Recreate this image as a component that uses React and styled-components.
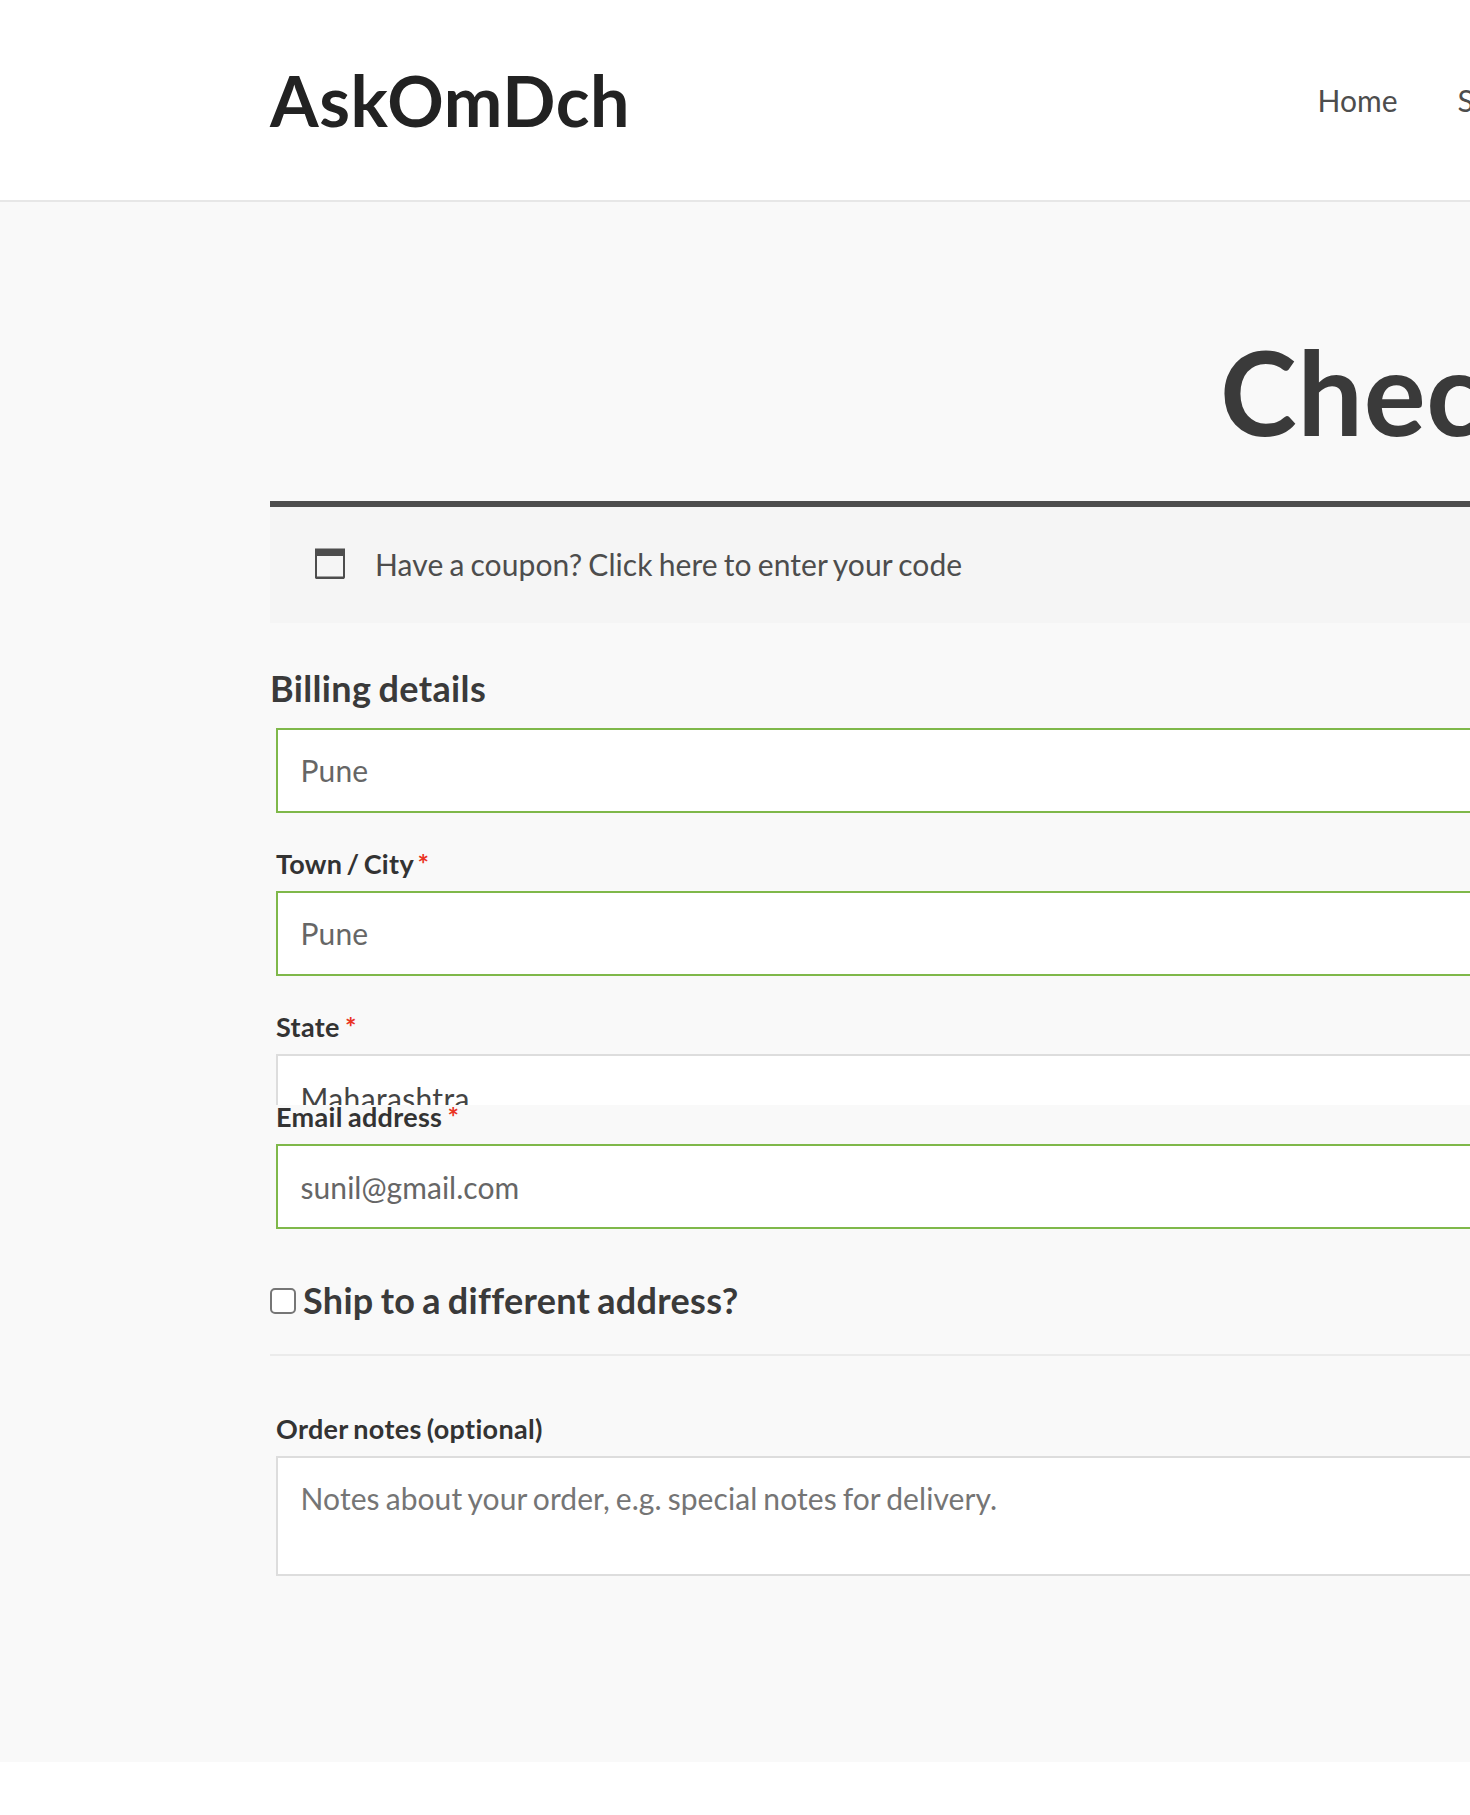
import React from "react";
import styled, { createGlobalStyle } from "styled-components";

const GlobalStyle = createGlobalStyle`
  *, *::before, *::after { box-sizing: border-box; }
  html, body { margin: 0; padding: 0; background: #fff; }
  body, input, textarea {
    font-family: Lato, "Liberation Sans", sans-serif;
    font-size: 30px;
    font-variant-ligatures: none;
  }
`;

const Page = styled.div`
  width: 100%;
  height: 1815px;
  overflow: hidden;
  background: #fff;
  color: #4d4d4d;
`;

const Header = styled.header`
  display: flex;
  justify-content: space-between;
  height: 202px;
  padding-left: 270px;
  border-bottom: 2px solid #e7e7e7;
`;

const Logo = styled.a`
  padding-top: 58px;
  font-size: 70px;
  line-height: 84px;
  font-weight: 700;
  letter-spacing: 0.58px;
  color: #222;
`;

const Nav = styled.nav`
  display: flex;
  gap: 60px;
  width: 152.5px;
  padding-top: 82px;
  line-height: 36px;
  white-space: nowrap;
`;

const Main = styled.main`
  height: 1560px;
  padding: 120px 0 0 270px;
  background: #f9f9f9;
`;

const Content = styled.div`
  width: 2400px;
`;

const Title = styled.h1`
  margin: 0 0 39px;
  font-size: 116px;
  line-height: 140px;
  font-weight: 700;
  letter-spacing: 0.7px;
  text-align: center;
  color: #3a3a3a;
`;

const Notice = styled.div`
  display: flex;
  align-items: center;
  gap: 30px;
  height: 122px;
  padding: 0 0 2px 45px;
  border-top: 6px solid #4d4d4d;
  background: #f5f5f5;
  line-height: 36px;
  letter-spacing: 0.1px;
  word-spacing: -1.75px;
`;

const NoticeIcon = styled.svg`
  display: block;
  flex: none;
  width: 30px;
  height: 31px;
  margin-bottom: 1px;
`;

const Column = styled.section`
  width: 1320px;
`;

const SectionHeading = styled.h3`
  margin: 0;
  padding-top: 43px;
  height: 105px;
  font-size: 36px;
  line-height: 44px;
  font-weight: 700;
  letter-spacing: 0.36px;
  word-spacing: -2px;
  color: #3a3a3a;
`;

const Field = styled.div`
  display: flex;
  flex-direction: column;
  margin: 0 6px ${(p) => p.$gap ?? 39}px;
`;

const Label = styled.label`
  margin-bottom: 16px;
  font-size: 27px;
  line-height: 23px;
  font-weight: 700;
  letter-spacing: 0.32px;
  word-spacing: ${(p) => p.$space ?? -1.7}px;
  color: #333;
`;

const Required = styled.span`
  color: #ea3323;
`;

const Input = styled.input`
  flex: none;
  width: 100%;
  height: 85px;
  padding: ${(p) => p.$top ?? 0}px 22px ${(p) => p.$bottom ?? 0}px 22.6px;
  border: 2px solid ${(p) => (p.$valid ? "#7fb84a" : "#ddd")};
  border-radius: 0;
  outline: none;
  background: #fff;
  letter-spacing: ${(p) => p.$tracking ?? 0.1}px;
  color: ${(p) => (p.$valid ? "#666" : "#444")};
`;

const CutOff = styled.div`
  height: 51px;
  overflow: hidden;
`;

const ShipRow = styled.label`
  display: flex;
  align-items: center;
  gap: 7px;
  height: 76px;
  font-size: 36px;
  line-height: 44px;
  font-weight: 700;
  letter-spacing: 0.3px;
  word-spacing: -2px;
  color: #3a3a3a;
`;

const ShipText = styled.span`
  padding-bottom: 2px;
`;

const Checkbox = styled.input`
  appearance: none;
  flex: none;
  width: 26px;
  height: 26px;
  margin: 0;
  border: 2px solid #767676;
  border-radius: 5px;
  background: #fff;
`;

const Divider = styled.hr`
  height: 2px;
  margin: 15px 0 61px;
  border: 0;
  background: #ebebeb;
`;

const Notes = styled.textarea`
  display: block;
  width: 100%;
  height: 120px;
  padding: 22px 22px 22px 22.6px;
  border: 2px solid #ddd;
  border-radius: 0;
  outline: none;
  resize: none;
  overflow: hidden;
  background: #fff;
  line-height: 36px;
  letter-spacing: 0.08px;
  word-spacing: -1.8px;
  &::placeholder { color: #757575; opacity: 1; }
`;

export default function App() {
  return (
    <Page>
      <GlobalStyle />
      <Header>
        <Logo>AskOmDch</Logo>
        <Nav>
          <span>Home</span>
          <span>Store</span>
        </Nav>
      </Header>
      <Main>
        <Content>
          <Title>Checkout</Title>
          <Notice>
            <NoticeIcon viewBox="0 0 30 31">
              <path fill="#4d4d4d" fillRule="evenodd" d="M0 0.6H30V29.5L29 31H1L0 30ZM2 8V28.6H28V8Z" />
            </NoticeIcon>
            <span>Have a coupon? Click here to enter your code</span>
          </Notice>
          <Column>
            <SectionHeading>Billing details</SectionHeading>
            <Field>
              <Input $valid $bottom={2} defaultValue="Pune" />
            </Field>
            <Field>
              <Label $space={-2.7}>Town / City <Required>*</Required></Label>
              <Input $valid $bottom={2} defaultValue="Pune" />
            </Field>
            <Field $gap={0}>
              <Label>State <Required>*</Required></Label>
              <CutOff>
                <Input $top={3} $tracking={0.33} defaultValue="Maharashtra" />
              </CutOff>
            </Field>
            <Field $gap={34}>
              <Label>Email address <Required>*</Required></Label>
              <Input $valid $top={1} $tracking={0.03} defaultValue="sunil@gmail.com" />
            </Field>
            <ShipRow>
              <Checkbox type="checkbox" />
              <ShipText>Ship to a different address?</ShipText>
            </ShipRow>
          </Column>
          <Divider />
          <Column>
            <Field>
              <Label>Order notes (optional)</Label>
              <Notes placeholder="Notes about your order, e.g. special notes for delivery." />
            </Field>
          </Column>
        </Content>
      </Main>
    </Page>
  );
}
